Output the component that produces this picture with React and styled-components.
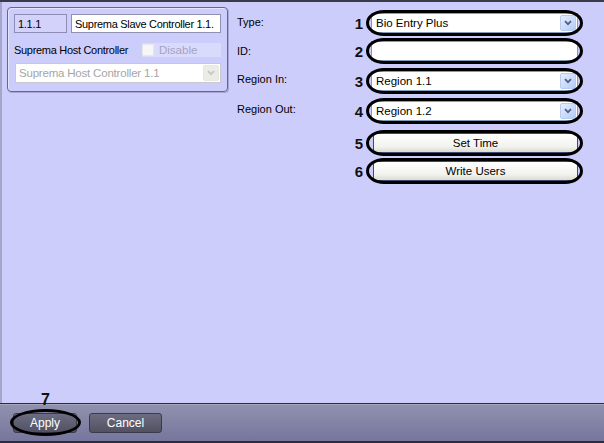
import React from "react";
import styled, { createGlobalStyle } from "styled-components";

const GlobalStyle = createGlobalStyle`
  html, body { margin: 0; padding: 0; }
  body {
    width: 604px;
    height: 443px;
    overflow: hidden;
    font-family: "Liberation Sans", Arial, sans-serif;
    font-size: 11px;
    color: #000;
  }
`;

const Window = styled.div`
  width: 604px;
  height: 443px;
  box-sizing: border-box;
  display: flex;
  flex-direction: column;
  border-top: 2px solid #3a3a48;
  background: #cdcdfc;
`;

const Main = styled.div`
  flex: 1;
  display: flex;
  align-items: flex-start;
  border-left: 2px solid #a6a6ca;
`;

// left group box
const Group = styled.div`
  margin: 5px 0 0 5px;
  width: 221px;
  height: 85px;
  box-sizing: border-box;
  padding: 6px 6px 0 6px;
  border: 1px solid #66668e;
  border-radius: 4px;
  box-shadow: inset 1px 1px 0 #e4e4ff, 1px 1px 0 #a8a8d4;
  display: flex;
  flex-direction: column;
`;

const GroupRow = styled.div`
  display: flex;
  align-items: center;
  gap: ${(p) => p.$gap || 0}px;
  margin-top: ${(p) => p.$top || 0}px;
  height: ${(p) => p.$h}px;
`;

const TextBox = styled.div`
  width: ${(p) => p.$w}px;
  height: 100%;
  box-sizing: border-box;
  border: 1px solid ${(p) => (p.$dim ? "#8c8cb4" : "#9090b0")};
  background: ${(p) => (p.$dim ? "#d2d2fb" : "#fff")};
  padding: 0 3px;
  display: flex;
  align-items: center;
  white-space: nowrap;
  overflow: hidden;
  font-size: 11px;
  letter-spacing: -0.3px;
`;

const HostLabel = styled.span`
  width: 128px;
  white-space: nowrap;
  letter-spacing: -0.3px;
`;

const DisableBox = styled.div`
  flex: 1;
  height: 100%;
  background: #dadafd;
  display: flex;
  align-items: center;
  gap: 5px;
  color: #a4a4c4;
  font-size: 11.5px;
`;

const Check = styled.span`
  width: 12px;
  height: 12px;
  box-sizing: border-box;
  background: #f6f6f4;
  border: 1px solid #e6e6ee;
`;

const DisabledSelect = styled.div`
  margin-left: 1px;
  width: 206px;
  height: 100%;
  box-sizing: border-box;
  border: 1px solid #c8c8d0;
  background: #fff;
  display: flex;
  align-items: center;
  justify-content: space-between;
  padding-left: 3px;
  color: #a6a6a6;
  font-size: 11.5px;
  letter-spacing: -0.2px;
`;

const ArrowBtn = styled.span`
  width: 16px;
  height: 16px;
  margin-right: 1px;
  box-sizing: border-box;
  border-radius: 2px;
  display: flex;
  align-items: center;
  justify-content: center;
  border: 1px solid ${(p) => (p.$off ? "#e8e8e0" : "#b8cbf0")};
  background: ${(p) =>
    p.$off ? "#ececE6" : "linear-gradient(135deg, #e6eeff, #b6cbf6)"};
`;

const Chevron = ({ off }) => (
  <svg width="8" height="6" viewBox="0 0 8 6">
    <path
      d="M1 1.2 L4 4.2 L7 1.2"
      fill="none"
      stroke={off ? "#c8c8c0" : "#4d6185"}
      strokeWidth="1.8"
    />
  </svg>
);

// right form
const Form = styled.div`
  margin-left: 9px;
  padding-top: 11px;
  display: flex;
  flex-direction: column;
`;

const Row = styled.div`
  display: flex;
  align-items: center;
  height: 20px;
  margin-top: ${(p) => p.$top || 0}px;
`;

const Label = styled.span`
  width: 113px;
  margin-top: ${(p) => p.$dy || 0}px;
`;

const Num = styled.span`
  width: 13px;
  text-align: right;
  font-size: 15px;
  font-weight: bold;
  color: #111;
`;

const Callout = styled.div`
  position: relative;
  margin-left: ${(p) => (p.$btn ? 10 : 8)}px;
  width: ${(p) => (p.$btn ? 205 : 207)}px;
  height: 100%;
  &::after {
    content: "";
    position: absolute;
    top: -3px;
    bottom: -3px;
    left: ${(p) => (p.$btn ? -7 : -5)}px;
    right: -5px;
    border: 3px solid #000;
    border-radius: 18px / 50%;
    pointer-events: none;
  }
`;

const Select = styled.div`
  height: 100%;
  box-sizing: border-box;
  border: 1px solid #7f9db9;
  background: #fff;
  display: flex;
  align-items: center;
  justify-content: space-between;
  padding-left: 4px;
  font-size: 11.5px;
`;

const Button = styled.div`
  height: 100%;
  box-sizing: border-box;
  border: 1px solid #3c4a70;
  border-radius: 3px;
  background: linear-gradient(#ffffff, #f2f2ee 70%, #dcdcd4);
  display: flex;
  align-items: center;
  justify-content: center;
  font-size: 11.5px;
`;

// footer
const Footer = styled.div`
  height: 40px;
  box-sizing: border-box;
  border-top: 1px solid #2c2c3a;
  border-bottom: 2px solid #2c2c3a;
  box-shadow: inset 0 1px 0 #a6a6c0;
  background: linear-gradient(#9191ae, #76769e);
  display: flex;
  align-items: center;
  padding-left: 13px;
  gap: 12px;
`;

const FootBtn = styled.div`
  position: relative;
  width: ${(p) => p.$w}px;
  height: 20px;
  box-sizing: border-box;
  border: 1px solid #3a3a4c;
  border-radius: 3px;
  background: linear-gradient(#6c6c82, #515162);
  color: #fff;
  font-size: 12px;
  display: flex;
  align-items: center;
  justify-content: center;
  ${(p) =>
    p.$mark &&
    `
    &::after {
      content: "";
      position: absolute;
      top: -5px; bottom: -4px; left: -4px; right: -5px;
      border: 3px solid #000;
      border-radius: 50%;
    }
  `}
`;

const Mark = styled.span`
  position: absolute;
  top: -23px;
  left: 27px;
  font-size: 16px;
  font-weight: bold;
  color: #111;
`;

const fields = [
  { label: "Type:", num: "1", value: "Bio Entry Plus", arrow: true, top: 0, dy: -2 },
  { label: "ID:", num: "2", value: "", arrow: false, top: 8, dy: -1 },
  { label: "Region In:", num: "3", value: "Region 1.1", arrow: true, top: 10, dy: -4 },
  { label: "Region Out:", num: "4", value: "Region 1.2", arrow: true, top: 10, dy: -4 },
];

const buttons = [
  { num: "5", text: "Set Time", top: 12 },
  { num: "6", text: "Write Users", top: 8 },
];

export default function App() {
  return (
    <Window>
      <GlobalStyle />
      <Main>
        <Group>
          <GroupRow $h={19} $gap={4}>
            <TextBox $w={53} $dim>1.1.1</TextBox>
            <TextBox $w={150}>Suprema Slave Controller 1.1.</TextBox>
          </GroupRow>
          <GroupRow $h={14} $top={10}>
            <HostLabel>Suprema Host Controller</HostLabel>
            <DisableBox>
              <Check />
              Disable
            </DisableBox>
          </GroupRow>
          <GroupRow $h={20} $top={6}>
            <DisabledSelect>
              Suprema Host Controller 1.1
              <ArrowBtn $off>
                <Chevron off />
              </ArrowBtn>
            </DisabledSelect>
          </GroupRow>
        </Group>

        <Form>
          {fields.map((f) => (
            <Row key={f.num} $top={f.top}>
              <Label $dy={f.dy}>{f.label}</Label>
              <Num>{f.num}</Num>
              <Callout>
                <Select>
                  {f.value}
                  {f.arrow && (
                    <ArrowBtn>
                      <Chevron />
                    </ArrowBtn>
                  )}
                </Select>
              </Callout>
            </Row>
          ))}
          {buttons.map((b) => (
            <Row key={b.num} $top={b.top}>
              <Label />
              <Num>{b.num}</Num>
              <Callout $btn>
                <Button>{b.text}</Button>
              </Callout>
            </Row>
          ))}
        </Form>
      </Main>
      <Footer>
        <FootBtn $w={64} $mark>
          <Mark>7</Mark>
          Apply
        </FootBtn>
        <FootBtn $w={73}>Cancel</FootBtn>
      </Footer>
    </Window>
  );
}
